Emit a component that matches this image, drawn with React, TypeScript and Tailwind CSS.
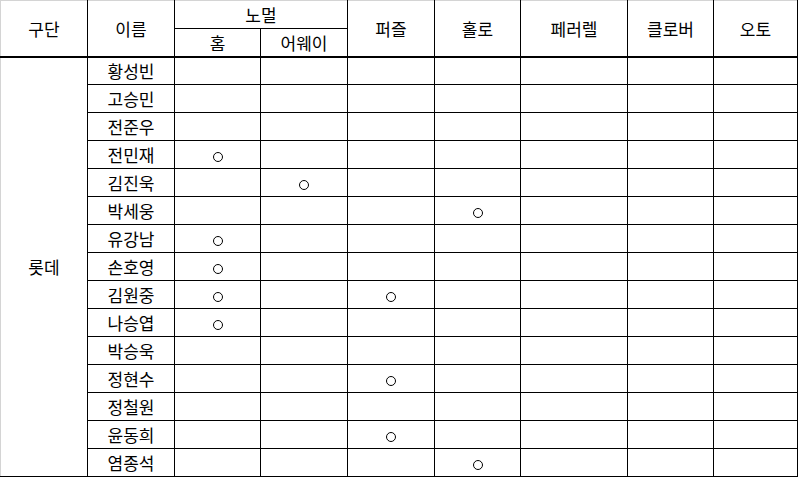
const names = [
  '황성빈',
  '고승민',
  '전준우',
  '전민재',
  '김진욱',
  '박세웅',
  '유강남',
  '손호영',
  '김원중',
  '나승엽',
  '박승욱',
  '정현수',
  '정철원',
  '윤동희',
  '염종석',
]

// columns: 0 홈, 1 어웨이, 2 퍼즐, 3 홀로, 4 페러렐, 5 클로버, 6 오토
const marks: Record<string, number[]> = {
  전민재: [0],
  김진욱: [1],
  박세웅: [3],
  유강남: [0],
  손호영: [0],
  김원중: [0, 2],
  나승엽: [0],
  정현수: [2],
  윤동희: [2],
  염종석: [3],
}

const widths = [87, 87, 86, 87, 87, 86, 107, 86, 84]

function Mark() {
  return <span className="inline-block w-[10px] h-[10px] rounded-full border-[1.5px] border-black align-middle" />
}

export default function App() {
  return (
    <div
      className="w-[800px] h-[477px] bg-white overflow-hidden text-black"
      style={{ fontFamily: '"Noto Sans CJK KR", "Noto Sans", sans-serif' }}
    >
      <table className="table-fixed border-collapse w-[798px] text-[17px] leading-none">
        <colgroup>
          {widths.map((w, i) => (
            <col key={i} style={{ width: w }} />
          ))}
        </colgroup>
        <thead>
          <tr className="h-[28px]">
            <th rowSpan={2} className="font-normal border-l border-l-[#d4d4d4] border-t border-t-[#d4d4d4] border-r border-r-black border-b-2 border-b-black">
              구단
            </th>
            <th rowSpan={2} className="font-normal border-t border-t-[#d4d4d4] border-r border-r-black border-b-2 border-b-black">
              이름
            </th>
            <th colSpan={2} className="font-normal border-t border-t-[#d4d4d4] border-r border-r-black border-b border-b-black">
              노멀
            </th>
            {['퍼즐', '홀로', '페러렐', '클로버', '오토'].map((h) => (
              <th key={h} rowSpan={2} className="font-normal border-t border-t-[#d4d4d4] border-r border-r-black border-b-2 border-b-black">
                {h}
              </th>
            ))}
          </tr>
          <tr className="h-[28px]">
            <th className="font-normal border-r border-black border-b-2 border-b-black">홈</th>
            <th className="font-normal border-r border-black border-b-2 border-b-black">어웨이</th>
          </tr>
        </thead>
        <tbody>
          {names.map((n, r) => (
            <tr key={n} className="h-[28px]">
              {r === 0 && (
                <td rowSpan={names.length} className="text-center border-l border-l-[#d4d4d4] border-r border-r-black border-b-2 border-b-black">
                  롯데
                </td>
              )}
              <td
                className={
                  'text-center border-r border-r-black border-solid ' +
                  (r === names.length - 1 ? 'border-b-2 border-b-black' : 'border-b border-b-black border-b-dotted')
                }
              >
                {n}
              </td>
              {[0, 1, 2, 3, 4, 5, 6].map((c) => (
                <td
                  key={c}
                  className={
                    'text-center border-r border-r-black border-solid ' +
                    (r === names.length - 1 ? 'border-b-2 border-b-black' : 'border-b border-b-black border-b-dotted')
                  }
                >
                  {marks[n]?.includes(c) && <Mark />}
                </td>
              ))}
            </tr>
          ))}
        </tbody>
      </table>
    </div>
  )
}
